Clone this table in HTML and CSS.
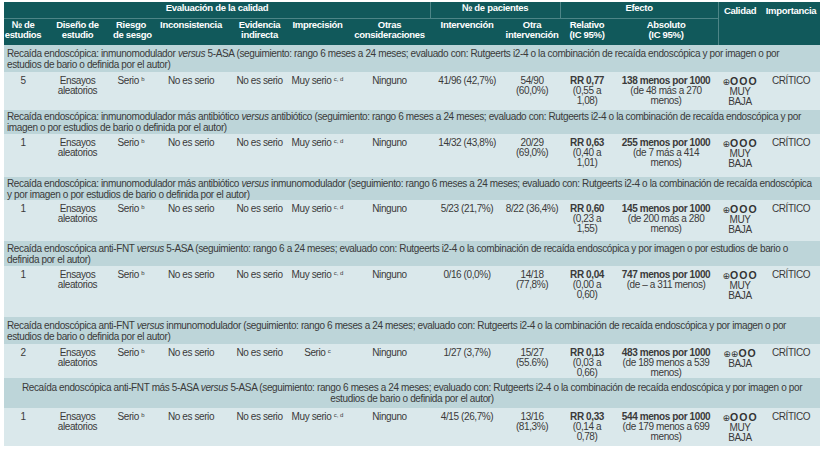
FILE: index.html
```html
<!DOCTYPE html>
<html lang="es">
<head>
<meta charset="utf-8">
<title>Perfil de evidencia GRADE</title>
<link rel="stylesheet" href="styles.css">
</head>
<body>
<div class="page">
<table class="grade">
  <colgroup>
    <col class="c1"><col class="c2"><col class="c3"><col class="c4"><col class="c5"><col class="c6"><col class="c7">
    <col class="c8"><col class="c9"><col class="c10"><col class="c11"><col class="c12"><col class="c13">
  </colgroup>
  <thead>
    <tr class="hr1">
      <th colspan="7" class="grp">Evaluación de la calidad</th>
      <th colspan="2" class="grp sep">№ de pacientes</th>
      <th colspan="2" class="grp sep">Efecto</th>
      <th rowspan="2" class="top sep">Calidad</th>
      <th rowspan="2" class="top">Importancia</th>
    </tr>
    <tr class="hr2">
      <th>№ de<br>estudios</th>
      <th>Diseño de<br>estudio</th>
      <th>Riesgo<br>de sesgo</th>
      <th>Inconsistencia</th>
      <th>Evidencia<br>indirecta</th>
      <th>Imprecisión</th>
      <th>Otras<br>consideraciones</th>
      <th>Intervención</th>
      <th>Otra<br>intervención</th>
      <th>Relativo<br>(IC 95%)</th>
      <th>Absoluto<br>(IC 95%)</th>
    </tr>
  </thead>
  <tbody>
    <tr class="sec s1"><td colspan="13">Recaída endoscópica: inmunomodulador <i>versus</i> 5-ASA (seguimiento: rango 6 meses a 24 meses; evaluado con: Rutgeerts i2-4 o la combinación de recaída endoscópica y por imagen o por<br>estudios de bario o definida por el autor)</td></tr>
    <tr class="dat d1">
      <td>5</td><td>Ensayos<br>aleatorios</td><td>Serio <sup>b</sup></td><td>No es serio</td><td>No es serio</td><td>Muy serio <sup>c, d</sup></td><td>Ninguno</td>
      <td>41/96 (42,7%)</td><td>54/90<br>(60,0%)</td><td><b>RR 0,77</b><br>(0,55 a<br>1,08)</td><td><b>138 menos por 1000</b><br>(de 48 más a 270<br>menos)</td>
      <td><span class="sym"><span class="plus">⊕</span>OOO</span><br>MUY<br>BAJA</td><td>CRÍTICO</td>
    </tr>
    <tr class="sec s2"><td colspan="13">Recaída endoscópica: inmunomodulador más antibiótico <i>versus</i> antibiótico (seguimiento: rango 6 meses a 24 meses; evaluado con: Rutgeerts i2-4 o la combinación de recaída endoscópica y por<br>imagen o por estudios de bario o definida por el autor)</td></tr>
    <tr class="dat d2">
      <td>1</td><td>Ensayos<br>aleatorios</td><td>Serio <sup>b</sup></td><td>No es serio</td><td>No es serio</td><td>Muy serio <sup>c, d</sup></td><td>Ninguno</td>
      <td>14/32 (43,8%)</td><td>20/29<br>(69,0%)</td><td><b>RR 0,63</b><br>(0,40 a<br>1,01)</td><td><b>255 menos por 1000</b><br>(de 7 más a 414<br>menos)</td>
      <td><span class="sym"><span class="plus">⊕</span>OOO</span><br>MUY<br>BAJA</td><td>CRÍTICO</td>
    </tr>
    <tr class="sec s3"><td colspan="13">Recaída endoscópica: inmunomodulador más antibiótico <i>versus</i> inmunomodulador (seguimiento: rango 6 meses a 24 meses; evaluado con: Rutgeerts i2-4 o la combinación de recaída endoscópica<br>y por imagen o por estudios de bario o definida por el autor)</td></tr>
    <tr class="dat d3">
      <td>1</td><td>Ensayos<br>aleatorios</td><td>Serio <sup>b</sup></td><td>No es serio</td><td>No es serio</td><td>Muy serio <sup>c, d</sup></td><td>Ninguno</td>
      <td>5/23 (21,7%)</td><td>8/22 (36,4%)</td><td><b>RR 0,60</b><br>(0,23 a<br>1,55)</td><td><b>145 menos por 1000</b><br>(de 200 más a 280<br>menos)</td>
      <td><span class="sym"><span class="plus">⊕</span>OOO</span><br>MUY<br>BAJA</td><td>CRÍTICO</td>
    </tr>
    <tr class="sec s4"><td colspan="13">Recaída endoscópica anti-FNT <i>versus</i> 5-ASA (seguimiento: rango 6 a 24 meses; evaluado con: Rutgeerts i2-4 o la combinación de recaída endoscópica y por imagen o por estudios de bario o<br>definida por el autor)</td></tr>
    <tr class="dat d4">
      <td>1</td><td>Ensayos<br>aleatorios</td><td>Serio <sup>b</sup></td><td>No es serio</td><td>No es serio</td><td>Muy serio <sup>c, d</sup></td><td>Ninguno</td>
      <td>0/16 (0,0%)</td><td>14/18<br>(77,8%)</td><td><b>RR 0,04</b><br>(0,00 a<br>0,60)</td><td><b>747 menos por 1000</b><br>(de – a 311 menos)</td>
      <td><span class="sym"><span class="plus">⊕</span>OOO</span><br>MUY<br>BAJA</td><td>CRÍTICO</td>
    </tr>
    <tr class="sec s5"><td colspan="13">Recaída endoscópica anti-FNT <i>versus</i> inmunomodulador (seguimiento: rango 6 meses a 24 meses; evaluado con: Rutgeerts i2-4 o la combinación de recaída endoscópica y por imagen o por<br>estudios de bario o definida por el autor)</td></tr>
    <tr class="dat d5">
      <td>2</td><td>Ensayos<br>aleatorios</td><td>Serio <sup>b</sup></td><td>No es serio</td><td>No es serio</td><td>Serio <sup>c</sup></td><td>Ninguno</td>
      <td>1/27 (3,7%)</td><td>15/27<br>(55.6%)</td><td><b>RR 0,13</b><br>(0,03 a<br>0,66)</td><td><b>483 menos por 1000</b><br>(de 189 menos a 539<br>menos)</td>
      <td><span class="sym"><span class="plus">⊕⊕</span>OO</span><br>BAJA</td><td>CRÍTICO</td>
    </tr>
    <tr class="sec s6 center"><td colspan="13">Recaída endoscópica anti-FNT más 5-ASA <i>versus</i> 5-ASA (seguimiento: rango 6 meses a 24 meses; evaluado con: Rutgeerts i2-4 o la combinación de recaída endoscópica y por imagen o por<br>estudios de bario o definida por el autor)</td></tr>
    <tr class="dat d6">
      <td>1</td><td>Ensayos<br>aleatorios</td><td>Serio <sup>b</sup></td><td>No es serio</td><td>No es serio</td><td>Muy serio <sup>c, d</sup></td><td>Ninguno</td>
      <td>4/15 (26,7%)</td><td>13/16<br>(81,3%)</td><td><b>RR 0,33</b><br>(0,14 a<br>0,78)</td><td><b>544 menos por 1000</b><br>(de 179 menos a 699<br>menos)</td>
      <td><span class="sym"><span class="plus">⊕</span>OOO</span><br>MUY<br>BAJA</td><td>CRÍTICO</td>
    </tr>
  </tbody>
</table>
</div>
</body>
</html>
```

FILE: styles.css
```css
html, body {
  margin: 0;
  padding: 0;
  background: #ffffff;
}

.page {
  padding: 2px 5px 0 4px;
}

.grade {
  border-collapse: collapse;
  border-spacing: 0;
  table-layout: fixed;
  width: 816px;
  font-family: "Liberation Sans", Arial, sans-serif;
  font-size: 10px;
  letter-spacing: -0.4px;
  color: #3a3a3a;
}

.grade th,
.grade td {
  padding: 0;
  white-space: nowrap;
}

.c1 { width: 38px; }
.c2 { width: 71px; }
.c3 { width: 36px; }
.c4 { width: 84px; }
.c5 { width: 53px; }
.c6 { width: 63px; }
.c7 { width: 81px; }
.c8 { width: 74px; }
.c9 { width: 56px; }
.c10 { width: 54px; }
.c11 { width: 104px; }
.c12 { width: 44px; }
.c13 { width: 58px; }

/* header */
.grade thead th {
  background: #11595b;
  color: #ffffff;
  font-weight: bold;
  font-size: 9.5px;
  letter-spacing: -0.3px;
  line-height: 10px;
  text-align: center;
  vertical-align: top;
}

.hr1 th {
  height: 16px;
  vertical-align: middle;
  padding-top: 1px;
}

.hr1 th.grp {
  box-shadow: inset 0 -1px 0 #4d8587;
}

.hr1 th.grp.sep {
  box-shadow: inset 0 -1px 0 #4d8587, inset 1px 0 0 #4d8587;
}

.hr1 th.top.sep {
  box-shadow: inset 1px 0 0 #4d8587;
}

.hr1 th.top {
  vertical-align: top;
  padding-top: 4px;
}

.hr2 th {
  height: 25px;
  padding-top: 1px;
}

/* section titles */
.sec td {
  background: #bdd5d9;
  line-height: 11px;
  text-align: left;
  vertical-align: middle;
  padding: 0 3px;
  letter-spacing: -0.37px;
}

.sec.center td {
  text-align: center;
}

.s1 { height: 27px; }
.s2 { height: 24px; }
.s3 { height: 23px; }
.s4 { height: 25px; }
.s5 { height: 27px; }
.s6 { height: 30px; }

/* data rows */
.dat td {
  background: #dae8eb;
  line-height: 10px;
  text-align: center;
  vertical-align: top;
  padding-top: 4px;
}

.d1 { height: 38px; }
.d2 { height: 43px; }
.d3 { height: 41px; }
.d4 { height: 51px; }
.d5 { height: 34px; }
.d6 { height: 38px; }

.sym {
  display: inline-block;
  height: 11px;
  line-height: 11px;
  vertical-align: top;
  font-weight: bold;
  font-size: 10.5px;
  letter-spacing: 1px;
  color: #333333;
}

.plus {
  font-family: "DejaVu Sans", sans-serif;
  font-weight: normal;
  font-size: 9px;
  letter-spacing: 0;
}

sup {
  font-size: 6px;
  line-height: 0;
  vertical-align: 3px;
  letter-spacing: 0;
}
```
